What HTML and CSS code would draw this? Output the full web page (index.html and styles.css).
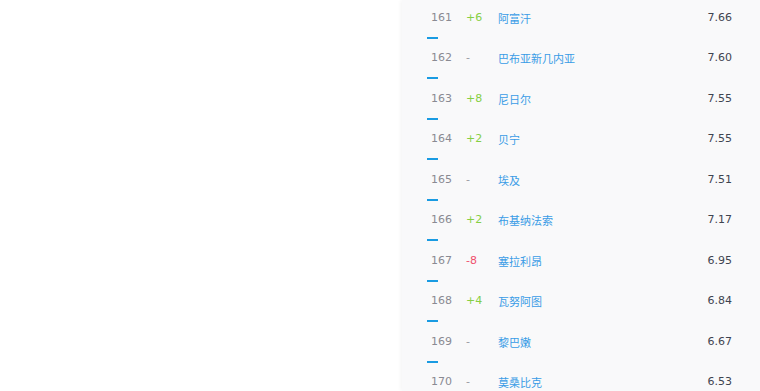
FILE: index.html
```html
<!DOCTYPE html>
<html lang="zh">
<head>
<meta charset="utf-8">
<link rel="stylesheet" href="styles.css">
</head>
<body>
<div class="page">
  <div class="panel">
    <div class="row"><div class="line"><span class="rank">161</span><span class="chg up">+6</span><span class="name">阿富汗</span><span class="val">7.66</span></div><div class="bar"></div></div>
    <div class="row"><div class="line"><span class="rank">162</span><span class="chg same">-</span><span class="name">巴布亚新几内亚</span><span class="val">7.60</span></div><div class="bar"></div></div>
    <div class="row"><div class="line"><span class="rank">163</span><span class="chg up">+8</span><span class="name">尼日尔</span><span class="val">7.55</span></div><div class="bar"></div></div>
    <div class="row"><div class="line"><span class="rank">164</span><span class="chg up">+2</span><span class="name">贝宁</span><span class="val">7.55</span></div><div class="bar"></div></div>
    <div class="row"><div class="line"><span class="rank">165</span><span class="chg same">-</span><span class="name">埃及</span><span class="val">7.51</span></div><div class="bar"></div></div>
    <div class="row"><div class="line"><span class="rank">166</span><span class="chg up">+2</span><span class="name">布基纳法索</span><span class="val">7.17</span></div><div class="bar"></div></div>
    <div class="row"><div class="line"><span class="rank">167</span><span class="chg down">-8</span><span class="name">塞拉利昂</span><span class="val">6.95</span></div><div class="bar"></div></div>
    <div class="row"><div class="line"><span class="rank">168</span><span class="chg up">+4</span><span class="name">瓦努阿图</span><span class="val">6.84</span></div><div class="bar"></div></div>
    <div class="row"><div class="line"><span class="rank">169</span><span class="chg same">-</span><span class="name">黎巴嫩</span><span class="val">6.67</span></div><div class="bar"></div></div>
    <div class="row"><div class="line"><span class="rank">170</span><span class="chg same">-</span><span class="name">莫桑比克</span><span class="val">6.53</span></div><div class="bar"></div></div>
  </div>
</div>
</body>
</html>
```
FILE: styles.css
```css
html, body {
  margin: 0;
  padding: 0;
  background: #ffffff;
  overflow: hidden;
}
.page {
  width: 760px;
  height: 391px;
  display: flex;
  justify-content: flex-end;
  overflow: hidden;
}
.panel {
  width: 358px;
  height: 391px;
  overflow: hidden;
  background: #f9f9fa;
  box-shadow: -1px 0 4px rgba(0, 0, 0, 0.05);
  padding-top: 8px;
  box-sizing: border-box;
  font-family: "DejaVu Sans", "Noto Sans CJK SC", sans-serif;
  font-size: 11px;
}
.row {
  height: 40.44px;
  display: flex;
  flex-direction: column;
}
.line {
  display: flex;
  align-items: center;
  height: 20px;
  line-height: 20px;
  padding-left: 29px;
  padding-right: 28px;
}
.rank {
  width: 35px;
  color: #8a8a92;
}
.chg {
  width: 32px;
}
.up { color: #86cf44; }
.down { color: #f0506e; }
.same { color: #9a9aa2; }
.name {
  flex: 1;
  color: #3a9ce6;
  font-family: "Noto Sans CJK SC", sans-serif;
}
.val {
  color: #3f4450;
}
.bar {
  margin-top: 9px;
  margin-left: 25px;
  width: 11px;
  height: 2px;
  background: #1a9be2;
}
```
